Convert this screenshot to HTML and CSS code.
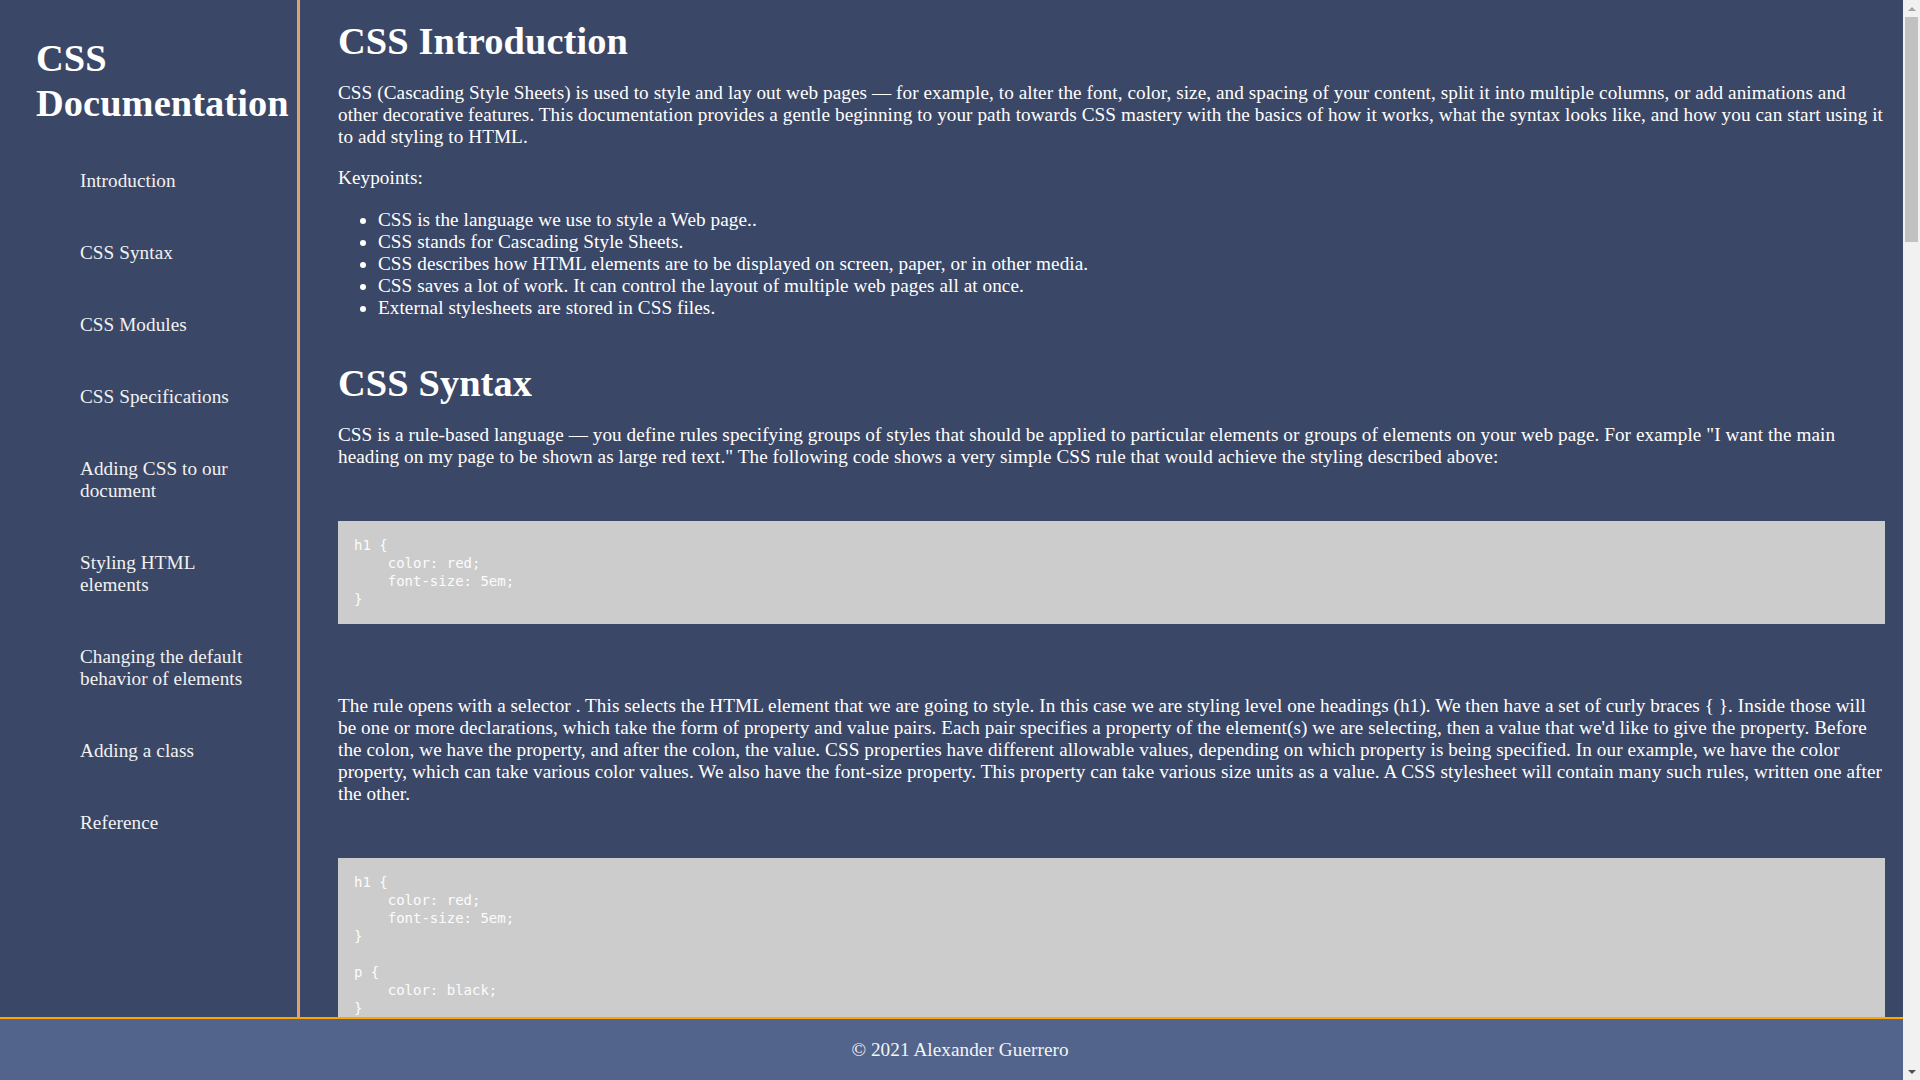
FILE: index.html
```html
<!DOCTYPE html>
<html lang="en">
<head>
<meta charset="utf-8">
<title>CSS Documentation</title>
<link rel="stylesheet" href="styles.css">
</head>
<body>
<nav class="navbar">
  <header class="nav-title">CSS Documentation</header>
  <ul class="nav-list">
    <li><a class="nav-link" href="#Introduction">Introduction</a></li>
    <li><a class="nav-link" href="#CSS_Syntax">CSS Syntax</a></li>
    <li><a class="nav-link" href="#CSS_Modules">CSS Modules</a></li>
    <li><a class="nav-link" href="#CSS_Specifications">CSS Specifications</a></li>
    <li><a class="nav-link" href="#Adding_CSS">Adding CSS to our document</a></li>
    <li><a class="nav-link" href="#Styling_HTML">Styling HTML elements</a></li>
    <li><a class="nav-link" href="#Changing_default">Changing the default behavior of elements</a></li>
    <li><a class="nav-link" href="#Adding_class">Adding a class</a></li>
    <li><a class="nav-link" href="#Reference">Reference</a></li>
  </ul>
</nav>

<main class="main-doc">
  <section class="main-section first" id="Introduction">
    <header class="sec-title">CSS Introduction</header>
    <p class="text">CSS (Cascading Style Sheets) is used to style and lay out web pages — for example, to alter the font, color, size, and spacing of your content, split it into multiple columns, or add animations and other decorative features. This documentation provides a gentle beginning to your path towards CSS mastery with the basics of how it works, what the syntax looks like, and how you can start using it to add styling to HTML.</p>
    <p class="text">Keypoints:</p>
    <ul class="points">
      <li>CSS is the language we use to style a Web page..</li>
      <li>CSS stands for Cascading Style Sheets.</li>
      <li>CSS describes how HTML elements are to be displayed on screen, paper, or in other media.</li>
      <li>CSS saves a lot of work. It can control the layout of multiple web pages all at once.</li>
      <li>External stylesheets are stored in CSS files.</li>
    </ul>
  </section>

  <section class="main-section" id="CSS_Syntax">
    <header class="sec-title">CSS Syntax</header>
    <p class="text">CSS is a rule-based language — you define rules specifying groups of styles that should be applied to particular elements or groups of elements on your web page. For example "I want the main heading on my page to be shown as large red text." The following code shows a very simple CSS rule that would achieve the styling described above:</p>
<pre class="code">h1 {
    color: red;
    font-size: 5em;
}</pre>
    <p class="text">The rule opens with a selector . This selects the HTML element that we are going to style. In this case we are styling level one headings (h1). We then have a set of curly braces { }. Inside those will be one or more declarations, which take the form of property and value pairs. Each pair specifies a property of the element(s) we are selecting, then a value that we'd like to give the property. Before the colon, we have the property, and after the colon, the value. CSS properties have different allowable values, depending on which property is being specified. In our example, we have the color property, which can take various color values. We also have the font-size property. This property can take various size units as a value. A CSS stylesheet will contain many such rules, written one after the other.</p>
<pre class="code">h1 {
    color: red;
    font-size: 5em;
}

p {
    color: black;
}</pre>
    <p class="text">You will find that you quickly learn some values, whereas others you will need to look up. The individual property pages on MDN give you a quick way to look up properties and their values when you forget, or want to know what else you can use as a value.</p>
  </section>

  <section class="main-section" id="CSS_Modules">
    <header class="sec-title">CSS Modules</header>
    <p class="text">As there are so many things that you could style using CSS, the language is broken down into modules. You'll see reference to these modules as you explore MDN and many of the documentation pages are organized around a particular module. For example, you could take a look at the MDN reference to the Backgrounds and Borders module to find out what its purpose is, and what different properties and other features it contains. You will also find links to the CSS Specification that defines the technology.</p>
    <p class="text">At this stage you don't need to worry too much about how CSS is structured, however it can make it easier to find information if, for example, you are aware that a certain property is likely to be found among other similar things and are therefore probably in the same specification.</p>
    <p class="text">For a specific example, let's go back to the Backgrounds and Borders module — you might think that it makes logical sense for the background-color and border-color properties to be defined in this module. And you'd be right.</p>
<pre class="code">.box {
    background-color: #567895;
    border: 5px solid #09c;
    border-radius: 10px;
}</pre>
    <p class="text">Other modules include Box Model, Color, Fonts, Text, Flexible Box Layout, Grid Layout, Transforms, Transitions, Animations and many more. Each of them describes a group of related properties, values and behaviors.</p>
  </section>

  <section class="main-section" id="CSS_Specifications">
    <header class="sec-title">CSS Specifications</header>
    <p class="text">All web standards technologies (HTML, CSS, JavaScript, etc.) are defined in giant documents called specifications (or simply "specs"), which are published by standards organizations (such as the W3C, WHATWG, ECMA, or Khronos) and define precisely how those technologies are supposed to behave.</p>
    <p class="text">CSS is no different — it is developed by a group within the W3C called the CSS Working Group. This group is made of representatives of browser vendors and other companies who have an interest in CSS. There are also other people, known as invited experts, who act as independent voices; they are not linked to a member organization.</p>
    <p class="text">New CSS features are developed, or specified, by the CSS Working Group. Sometimes because a particular browser is interested in having some capability, other times because web designers and developers are asking for a feature, and sometimes because the Working Group itself has identified a requirement.</p>
    <p class="text">As a beginner, you don't need to read the specifications. You will find it much easier to read the documentation on MDN, and come back to the specifications once you are more experienced and need to check exact details of how a feature is meant to behave.</p>
  </section>

  <section class="main-section" id="Adding_CSS">
    <header class="sec-title">Adding CSS to our document</header>
    <p class="text">The very first thing we need to do is to tell the HTML document that we have some CSS rules we want it to use. There are three different ways to apply CSS to an HTML document that you'll commonly come across, however, for now, we will look at the most usual and useful way of doing so — linking CSS from the head of your document.</p>
    <p class="text">Create a file in the same folder as your HTML document and save it as styles.css. The .css extension shows that this is a CSS file. To link styles.css to index.html add the following line somewhere inside the head of the HTML document:</p>
<pre class="code">&lt;link rel="stylesheet" href="styles.css"&gt;</pre>
    <p class="text">This link element tells the browser that we have a stylesheet, using the rel attribute, and the location of that stylesheet as the value of the href attribute. You can test that the CSS works by adding a rule to styles.css. Using your code editor add the following to your CSS file:</p>
<pre class="code">h1 {
    color: red;
}</pre>
    <p class="text">Save your HTML and CSS files and reload the page in a web browser. The level one heading at the top of the document should now be red.</p>
  </section>

  <section class="main-section" id="Styling_HTML">
    <header class="sec-title">Styling HTML elements</header>
    <p class="text">By making our heading red we have already demonstrated that we can target and style an HTML element. We do this by targeting an element selector — this is a selector that directly matches an HTML element name. To target all paragraphs in the document you would use the selector p.</p>
<pre class="code">p {
    color: green;
}</pre>
    <p class="text">You can target multiple selectors at once, by separating the selectors with a comma. If I want all paragraphs and all list items to be green my rule looks like this:</p>
<pre class="code">p, li {
    color: green;
}</pre>
  </section>

  <section class="main-section" id="Changing_default">
    <header class="sec-title">Changing the default behavior of elements</header>
    <p class="text">When we look at a well-marked up HTML document, even something as simple as our example, we can see how the browser is making the HTML readable by adding some default styling. Headings are large and bold and our list has bullets. This happens because browsers have internal stylesheets containing default styles, which they apply to all pages by default.</p>
    <p class="text">However, you will often want something other than the choice the browser has made. This can be done by choosing the HTML element that you want to change, and using a CSS rule to change the way it looks. A good example is our list, which has bullets. If you don't want those bullets, you can remove them like so:</p>
<pre class="code">li {
    list-style-type: none;
}</pre>
  </section>

  <section class="main-section" id="Adding_class">
    <header class="sec-title">Adding a class</header>
    <p class="text">So far we have styled elements based on their HTML element names. This works as long as you want all of the elements of that type in your document to look the same. Most of the time that isn't the case and so you will need to find a way to select a subset of the elements without changing the others. The most common way to do this is to add a class to your HTML element and target that class.</p>
<pre class="code">.special {
    color: orange;
    font-weight: bold;
}</pre>
    <p class="text">You can apply the class of special to any element on your page that you want to have the same look as this list item.</p>
  </section>

  <section class="main-section last" id="Reference">
    <header class="sec-title">Reference</header>
    <p class="text">All the documentation in this page is taken from MDN Web Docs and W3Schools.</p>
  </section>
</main>

<footer class="footer">© 2021 Alexander Guerrero</footer>

<div class="scrollbar" aria-hidden="true">
  <div class="sb-btn"><span class="sb-arrow-up"></span></div>
  <div class="sb-track"><div class="sb-thumb"></div></div>
  <div class="sb-btn"><span class="sb-arrow-down"></span></div>
</div>
</body>
</html>
```
FILE: styles.css
```css
html, body {
  margin: 0;
  padding: 0;
}

body {
  background: #3b4766;
  color: #ffffff;
  font-family: "Liberation Serif", "Times New Roman", serif;
  font-size: 19.2px;
  line-height: 22px;
  letter-spacing: 0.07px;
}

.navbar {
  position: fixed;
  top: 0;
  left: 0;
  width: 297px;
  height: 100vh;
  background: #3b4766;
  border-right: 3px solid #dfa26c;
}

.nav-title {
  font-size: 38.4px;
  font-weight: bold;
  line-height: 45px;
  margin: 36px 0 0 0;
  padding-left: 36px;
}

.nav-list {
  list-style: none;
  margin: 19px 0 0 0;
  padding: 0 40px 0 80px;
}

.nav-link {
  display: block;
  padding: 25px 0;
  color: #f2f2f2;
  text-decoration: none;
}

.main-doc {
  margin-left: 300px;
  padding: 19px 35px 80px 38px;
}

.main-section {
  margin-top: 42px;
}

.main-section.first {
  margin-top: 0;
}

.sec-title {
  display: block;
  font-size: 38.4px;
  font-weight: bold;
  line-height: 44px;
  letter-spacing: 0.1px;
}

.text {
  margin: 19.2px 0;
}

.points {
  margin: 19.2px 0;
  padding-left: 40px;
}

.code {
  background: #cccccc;
  color: #fcfcfc;
  font-family: "DejaVu Sans Mono", monospace;
  font-size: 14px;
  line-height: 18px;
  letter-spacing: 0;
  margin: 53px 0 71px;
  padding: 15px 16px 16px;
  white-space: pre;
}

.footer {
  position: fixed;
  left: 0;
  bottom: 0;
  width: 100%;
  box-sizing: border-box;
  background: #52648c;
  border-top: 2px solid #ffa500;
  padding: 20px 0 19px;
  text-align: center;
  color: #f4f4f4;
}

/* window scrollbar (overlay at the right edge) */
.scrollbar {
  position: fixed;
  top: 0;
  right: 0;
  width: 17px;
  height: 100vh;
  background: #f1f1f1;
  display: flex;
  flex-direction: column;
  z-index: 10;
}

.sb-btn {
  height: 17px;
  flex: 0 0 17px;
  display: flex;
  align-items: center;
  justify-content: center;
}

.sb-arrow-up {
  width: 0;
  height: 0;
  border-left: 4px solid transparent;
  border-right: 4px solid transparent;
  border-bottom: 4px solid #a3a3a3;
}

.sb-arrow-down {
  width: 0;
  height: 0;
  border-left: 4px solid transparent;
  border-right: 4px solid transparent;
  border-top: 4px solid #505050;
}

.sb-track {
  flex: 1;
  padding: 0 2px;
}

.sb-thumb {
  height: 225px;
  background: #c1c1c1;
}
```
